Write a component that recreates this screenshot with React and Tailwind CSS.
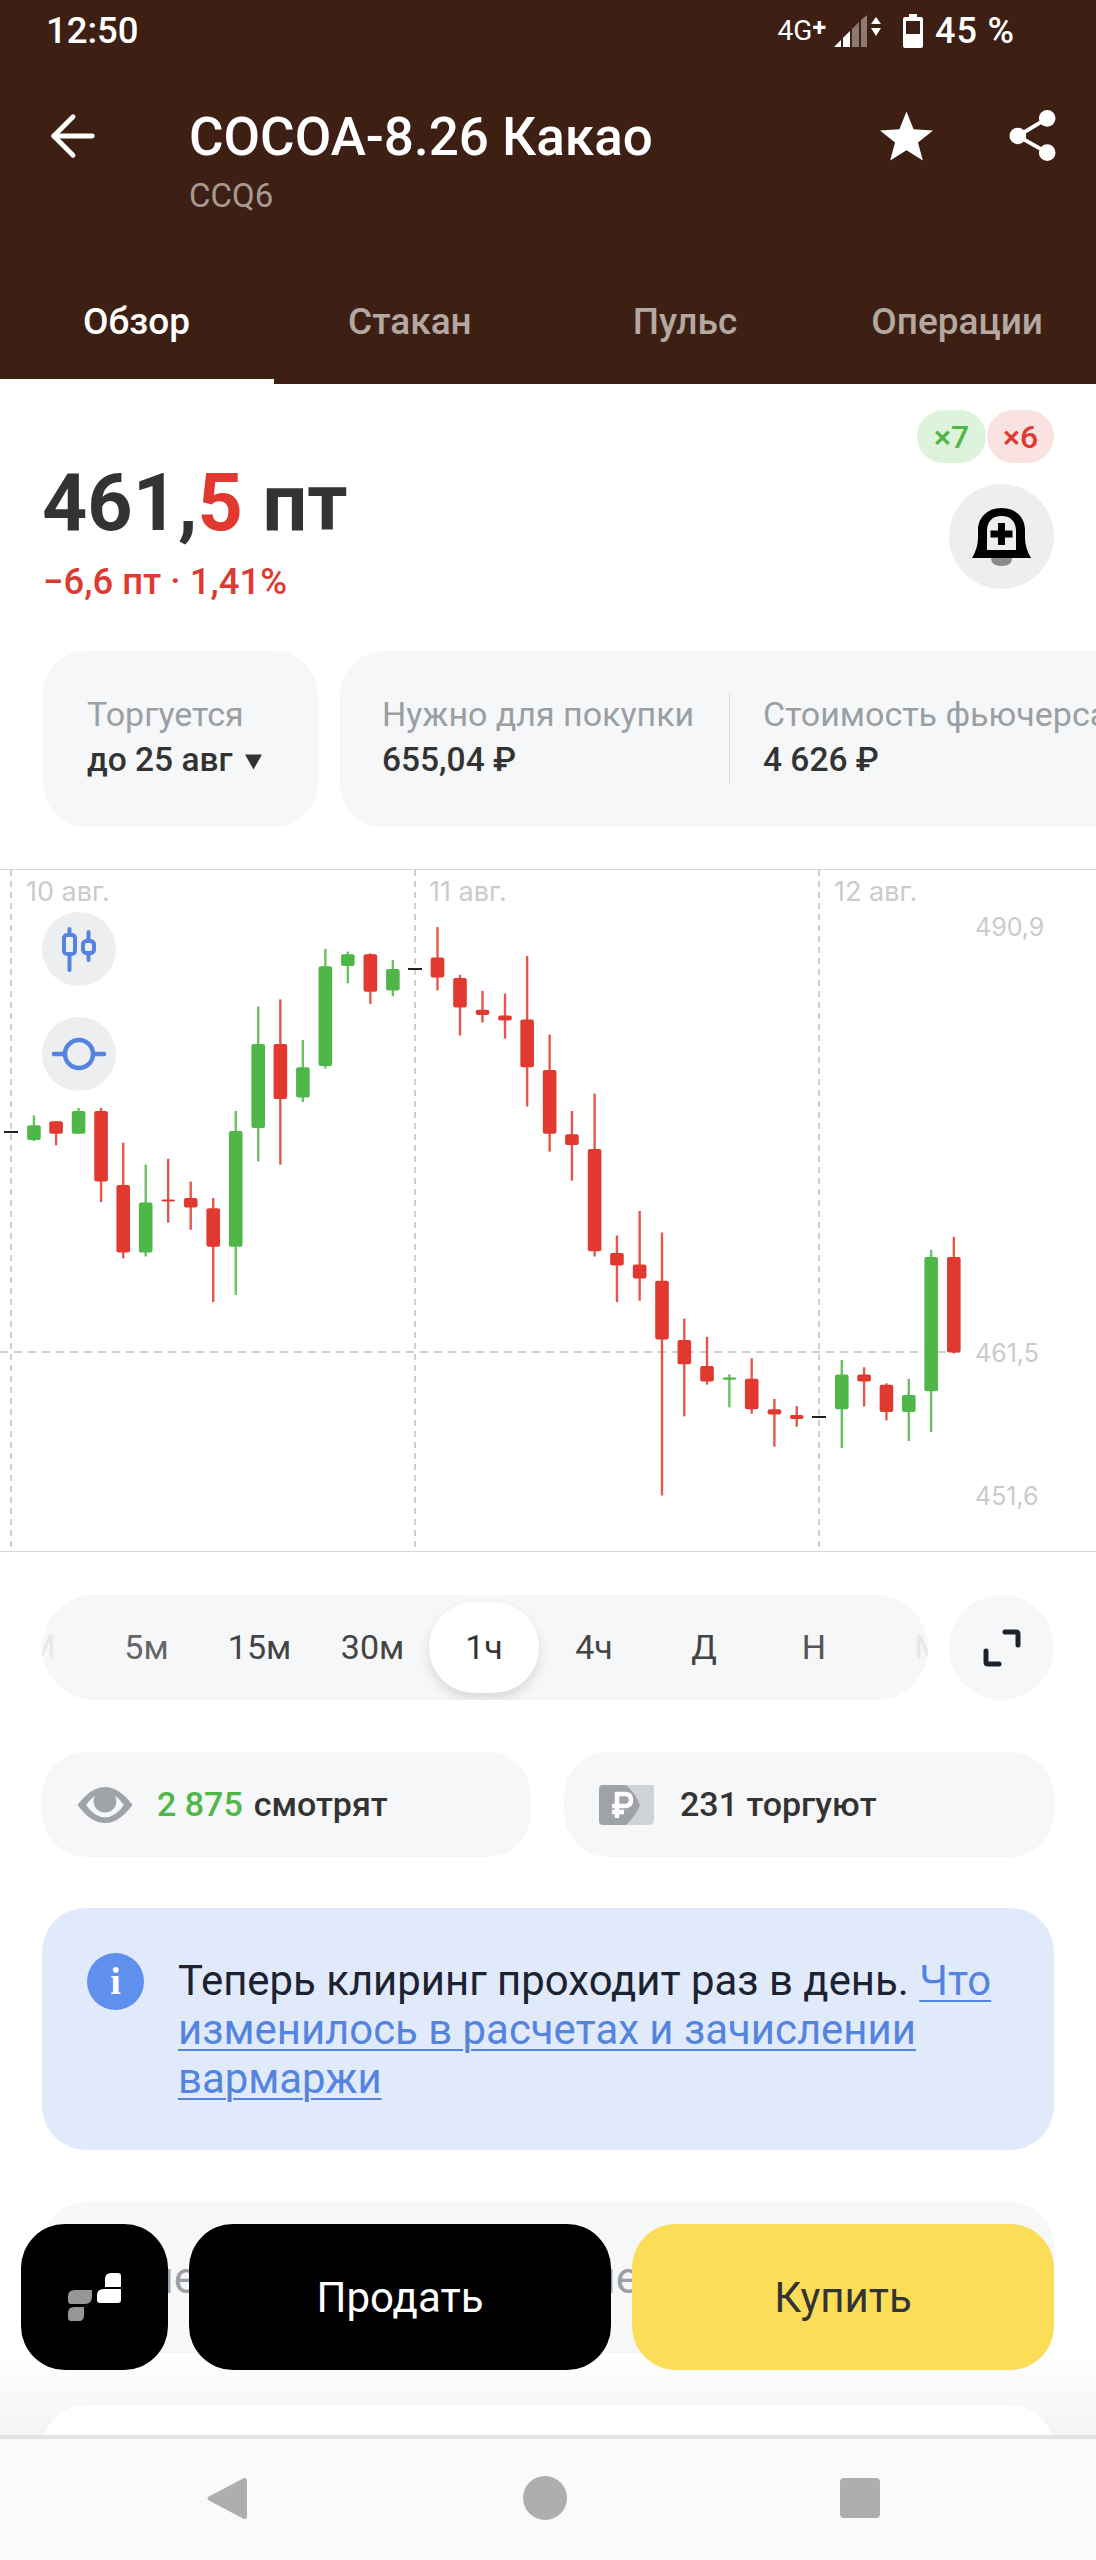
import React from 'react';
import { ArrowLeft } from 'lucide-react';

const UP = '#4fb648';
const DOWN = '#e1382f';

// candles as x, wick top, wick bottom, body top, body bottom, in chart pixels
const z3 = (x, a, b, c, d, color) => ({ x: x / 2.8, wt: a / 2.24 - 9, wb: b / 2.24 - 9, bt: c / 2.24 - 9, bb: d / 2.24 - 9, color });
const z4 = (x, a, b, c, d, color) => ({ x: 540 + x / 2.82, wt: a / 2.24 - 9, wb: b / 2.24 - 9, bt: c / 2.24 - 9, bb: d / 2.24 - 9, color });

const candles = [
  z3(95, 570, 627, 592, 625, UP), z3(157, 583, 637, 583, 611, DOWN), z3(220, 553, 611, 560, 611, UP),
  z3(283, 553, 764, 560, 718, DOWN), z3(345, 631, 890, 726, 877, DOWN), z3(408, 680, 886, 765, 877, UP),
  z3(471, 667, 810, 758, 761, DOWN), z3(534, 718, 826, 755, 776, DOWN), z3(597, 755, 988, 778, 864, DOWN),
  z3(660, 560, 972, 605, 864, UP), z3(723, 326, 673, 410, 598, UP), z3(785, 310, 680, 410, 533, DOWN),
  z3(848, 401, 540, 462, 530, UP), z3(911, 197, 465, 236, 459, UP), z3(974, 203, 274, 209, 235, UP),
  z3(1037, 207, 320, 209, 293, DOWN), z3(1100, 222, 303, 242, 290, UP), z3(1225, 148, 290, 216, 261, DOWN),
  z3(1288, 255, 391, 262, 328, DOWN), z3(1351, 291, 362, 333, 345, DOWN), z3(1414, 297, 398, 346, 357, DOWN),
  z3(1476, 213, 550, 355, 462, DOWN), z3(1539, 389, 651, 468, 611, DOWN),
  z4(90, 560, 716, 612, 636, DOWN), z4(154, 521, 886, 645, 874, DOWN), z4(217, 839, 988, 878, 906, DOWN),
  z4(281, 784, 985, 904, 935, DOWN), z4(344, 832, 1421, 940, 1072, DOWN), z4(407, 1025, 1244, 1073, 1127, DOWN),
  z4(471, 1066, 1173, 1131, 1166, DOWN), z4(534, 1150, 1224, 1157, 1162, UP), z4(597, 1114, 1238, 1160, 1228, DOWN),
  z4(661, 1205, 1312, 1228, 1240, DOWN), z4(724, 1221, 1267, 1241, 1250, DOWN), z4(851, 1118, 1315, 1150, 1228, UP),
  z4(914, 1134, 1222, 1150, 1166, DOWN), z4(977, 1170, 1253, 1173, 1234, DOWN), z4(1040, 1160, 1299, 1196, 1234, UP),
  z4(1103, 871, 1279, 887, 1188, UP), z4(1167, 842, 1103, 887, 1101, DOWN),
];

const dashes = [[11, 262], [415, 99], [819, 547]];

const StatusBar = () => (
  <div className="h-[62px] flex items-center justify-between pl-[46px] pr-[81px] text-white">
    <span className="text-[36.5px] leading-none font-medium">12:50</span>
    <div className="flex items-center">
      <span className="text-[28px] leading-none">4G</span>
      <span className="text-[25px] leading-none font-bold -mt-2">+</span>
      <svg width="49" height="32" viewBox="0 0 49 32" className="ml-2">
        <path d="M0 32 L7 25 V32Z" fill="#fff" />
        <path d="M9 32 V23 L16 16 V32Z" fill="#fff" />
        <path d="M18 32 V14 L25 7 V32Z" fill="#8c7a72" />
        <path d="M27 32 V5 L33 0 V32Z" fill="#8c7a72" />
        <path d="M37 9 L42 2 L47 9Z M37 13 H47 L42 21Z" fill="#fff" />
      </svg>
      <svg width="20" height="34" viewBox="0 0 20 34" className="ml-5">
        <path d="M6 0 H14 V3 H18 Q20 3 20 5 V32 Q20 34 18 34 H2 Q0 34 0 32 V5 Q0 3 2 3 H6Z" fill="#fff" />
        <rect x="3" y="7" width="14" height="13" fill="#3d1f14" />
      </svg>
      <span className="ml-3 text-[36px] leading-none font-medium tracking-wide">45 %</span>
    </div>
  </div>
);

const Header = () => (
  <div className="h-[384px] bg-[#3d1f14] flex flex-col shrink-0">
    <StatusBar />
    <div className="flex h-[148px] pl-[40px] pr-[40px] pt-[40px]">
      <ArrowLeft size={66} color="#fff" strokeWidth={1.75} className="mt-px shrink-0" />
      <div className="ml-[83px] flex-1">
        <div className="text-white text-[53px] leading-[70px] font-medium">COCOA-8.26 Какао</div>
        <div className="text-[#a89a93] text-[33px] leading-[40px] mt-[4px]">CCQ6</div>
      </div>
      <svg width="53" height="50" viewBox="0 0 24 22.2" fill="#fff" className="mt-[9px]">
        <path d="M12 0 L15.2 8 L24 8.6 L17.2 14 L19.4 22.2 L12 17.6 L4.6 22.2 L6.8 14 L0 8.6 L8.8 8Z" />
      </svg>
      <svg width="47" height="53" viewBox="0 0 48 53" fill="#fff" className="ml-[76px] mt-[7px]">
        <circle cx="39" cy="9" r="8.5" />
        <circle cx="9" cy="27" r="8.5" />
        <circle cx="39" cy="44" r="8.5" />
        <path d="M39 9 L9 27 L39 44" fill="none" stroke="#fff" strokeWidth="4" />
      </svg>
    </div>
    <div className="flex-1 font-medium text-[37px] leading-[42px] text-[#b5a8a2] flex">
      <div className="w-[274px] pl-[83px] pt-[91px] text-white border-b-[5px] border-white">Обзор</div>
      <div className="ml-[74px] pt-[91px]">Стакан</div>
      <div className="ml-[161px] pt-[91px]">Пульс</div>
      <div className="ml-[134px] pt-[91px]">Операции</div>
    </div>
  </div>
);

const PriceBlock = () => (
  <div className="relative h-[267px] shrink-0">
    <div className="pl-[42px] pt-[74px] text-[79px] leading-[90px] font-bold text-[#333]">
      461,<span className="text-[#e1382f]">5</span> пт
    </div>
    <div className="pl-[43px] pt-[12px] text-[36.5px] leading-[44px] font-medium text-[#dc3a32]">−6,6 пт · 1,41%</div>
    <div className="absolute right-[42px] top-[26px] flex gap-px">
      <span className="w-[69px] h-[53px] rounded-full bg-[#ddf3dc] text-[#4fb648] text-[32px] font-medium flex items-center justify-center">×7</span>
      <span className="w-[67px] h-[53px] rounded-full bg-[#fae2e1] text-[#dc3a32] text-[32px] font-medium flex items-center justify-center">×6</span>
    </div>
    <div className="absolute right-[42px] top-[100px] w-[105px] h-[105px] rounded-full bg-[#eceeef] flex items-center justify-center">
      <svg width="59" height="58" viewBox="0 0 59 58">
        <path d="M19 50 H40 Q40 58 29.5 58 Q19 58 19 50Z" fill="#8a8a8a" />
        <path fillRule="evenodd" d="M29.5 0 C16 0 6 9 6 22 V30 Q6 40 0 50 H59 Q53 40 53 30 V22 C53 9 43 0 29.5 0Z M29.5 8 C20 8 15 14 15 23 V42 H44 V23 C44 14 39 8 29.5 8Z" fill="#000" />
        <path d="M26 15 H33 V22.5 H40.5 V29.5 H33 V37 H26 V29.5 H18.5 V22.5 H26Z" fill="#000" />
      </svg>
    </div>
  </div>
);

const InfoCards = () => (
  <div className="h-[176px] shrink-0 flex pl-[43px] gap-[22px] overflow-hidden">
    <div className="w-[275px] shrink-0 rounded-[44px] bg-[#f6f7f8] pl-[44px] pt-[42px]">
      <div className="text-[34px] leading-[42px] text-[#9a9fa4]">Торгуется</div>
      <div className="mt-[4px] text-[33.5px] leading-[42px] font-medium text-[#333] flex items-center">
        до 25 авг
        <svg width="17" height="16" viewBox="0 0 18 16" className="ml-[12px] mt-[3px]"><path d="M0 0 H18 L9 16Z" fill="#333" /></svg>
      </div>
    </div>
    <div className="flex-1 rounded-l-[44px] bg-[#f6f7f8] flex pl-[42px] pt-[42px] whitespace-nowrap">
      <div className="w-[347px] shrink-0">
        <div className="text-[34px] leading-[42px] text-[#9a9fa4]">Нужно для покупки</div>
        <div className="mt-[4px] text-[33.5px] leading-[42px] font-medium text-[#333]">655,04 ₽</div>
      </div>
      <div className="w-px h-[91px] bg-[#dcdfe1] shrink-0" />
      <div className="pl-[33px]">
        <div className="text-[34px] leading-[42px] text-[#9a9fa4]">Стоимость фьючерса</div>
        <div className="mt-[4px] text-[33.5px] leading-[42px] font-medium text-[#333]">4 626 ₽</div>
      </div>
    </div>
  </div>
);

const Chart = () => (
  <div className="relative mt-[42px] h-[683px] shrink-0 border-y border-[#d5d5d5] overflow-hidden">
    <svg width="1096" height="682" className="absolute inset-0">
      {dashes.map(([x]) => (
        <line key={x} x1={x} x2={x} y1="0" y2="682" stroke="#cfcfcf" strokeWidth="2" strokeDasharray="6 5" />
      ))}
      <line x1="0" x2="965" y1="482" y2="482" stroke="#cfcfcf" strokeWidth="2" strokeDasharray="8 6" />
      {dashes.map(([x, y]) => (
        <line key={y} x1={x - 7} x2={x + 7} y1={y} y2={y} stroke="#222" strokeWidth="2" />
      ))}
      {candles.map((c) => (
        <g key={c.x}>
          <line x1={c.x} x2={c.x} y1={c.wt} y2={c.wb} stroke={c.color} strokeWidth="2.4" strokeOpacity="0.85" />
          <rect x={c.x - 6.8} y={c.bt} width="13.6" height={Math.max(c.bb - c.bt, 2)} rx="2" fill={c.color} />
        </g>
      ))}
    </svg>
    <span className="absolute left-[26px] top-[8px] text-[27px] leading-[28px] text-[#c9cbcd] font-['Inter',sans-serif]">10 авг.</span>
    <span className="absolute left-[429px] top-[8px] text-[27px] leading-[28px] text-[#c9cbcd] font-['Inter',sans-serif]">11 авг.</span>
    <span className="absolute left-[834px] top-[8px] text-[27px] leading-[28px] text-[#c9cbcd] font-['Inter',sans-serif]">12 авг.</span>
    <span className="absolute left-[975px] top-[43px] text-[25px] leading-[28px] text-[#c9cbcd] font-['Inter',sans-serif]">490,9</span>
    <span className="absolute left-[975px] top-[469px] text-[25px] leading-[28px] text-[#c9cbcd] font-['Inter',sans-serif]">461,5</span>
    <span className="absolute left-[975px] top-[612px] text-[25px] leading-[28px] text-[#c9cbcd] font-['Inter',sans-serif]">451,6</span>
    <div className="absolute left-[42px] top-[42px] flex flex-col gap-[31px]">
      <div className="w-[74px] h-[74px] rounded-full bg-[#eceeef] flex items-center justify-center">
        <svg width="36" height="46" viewBox="0 0 36 46" fill="none" stroke="#5484e0" strokeWidth="4" strokeLinecap="round">
          <rect x="3" y="9" width="11" height="19" rx="3" />
          <path d="M8.5 3 V9 M8.5 28 V44" />
          <rect x="22" y="15" width="11" height="12" rx="3.5" />
          <path d="M27.5 6 V15 M27.5 27 V34" />
        </svg>
      </div>
      <div className="w-[74px] h-[74px] rounded-full bg-[#eceeef] flex items-center justify-center">
        <svg width="54" height="34" viewBox="0 0 54 34" fill="none" stroke="#5484e0" strokeWidth="4.5" strokeLinecap="round">
          <ellipse cx="27" cy="17" rx="14" ry="14" />
          <path d="M2 17 H12 M42 17 H52" />
        </svg>
      </div>
    </div>
  </div>
);

const PeriodBar = () => (
  <div className="mt-[43px] h-[105px] shrink-0 flex px-[42px] gap-[21px]">
    <div className="relative flex-1 rounded-full bg-[#f6f7f8] flex items-center overflow-hidden pl-[48px] text-[34px] text-[#444]">
      <span className="absolute left-[-16px] text-[#e6e8ea]">М</span>
      <span className="w-[113px] text-center text-[#666]">5м</span>
      <span className="w-[113px] text-center">15м</span>
      <span className="w-[113px] text-center">30м</span>
      <span className="w-[110px] h-[91px] rounded-full bg-white shadow-[0_6px_12px_rgba(0,0,0,0.12)] flex items-center justify-center text-[#333]">1ч</span>
      <span className="w-[110px] text-center">4ч</span>
      <span className="w-[110px] text-center">Д</span>
      <span className="w-[110px] text-center text-[#555]">Н</span>
      <span className="absolute right-[-16px] text-[#e6e8ea]">М</span>
    </div>
    <div className="w-[105px] h-[105px] rounded-full bg-[#f6f7f8] flex items-center justify-center">
      <svg width="38" height="38" viewBox="0 0 38 38" fill="none" stroke="#1c2230" strokeWidth="5" strokeLinecap="round" strokeLinejoin="round">
        <path d="M22 3 H33 Q35 3 35 5 V16" />
        <path d="M3 22 V33 Q3 35 5 35 H16" />
      </svg>
    </div>
  </div>
);

const Stats = () => (
  <div className="mt-[52px] h-[105px] shrink-0 flex px-[42px] gap-[33px] text-[34px] font-medium text-[#333]">
    <div className="flex-1 rounded-[44px] bg-[#f6f7f8] flex items-center pl-[34px]">
      <svg width="58" height="36" viewBox="0 0 58 38" className="shrink-0">
        <path fillRule="evenodd" d="M0 19 Q14 0 29 0 Q44 0 58 19 Q44 38 29 38 Q14 38 0 19Z M9 19 Q18 32 29 32 Q40 32 49 19 Q40 6 29 6 Q18 6 9 19Z" fill="#a0a4a8" />
        <circle cx="29" cy="15" r="12" fill="#a0a4a8" />
      </svg>
      <span className="ml-[23px] text-[#4fb648]">2 875</span>
      <span className="ml-[11px]">смотрят</span>
    </div>
    <div className="flex-1 rounded-[44px] bg-[#f6f7f8] flex items-center pl-[35px]">
      <svg width="55" height="40" viewBox="0 0 55 40" className="shrink-0">
        <path d="M20 0 H55 V34 Q55 40 49 40 H20Z" fill="#cfd3d7" />
        <path d="M4 0 H27 Q36 8 41 20 Q36 32 27 40 H4 Q0 40 0 36 V4 Q0 0 4 0Z" fill="#9fa3a8" />
        <path d="M18 33 V9 H26 Q32 9 32 15 Q32 21 26 21 H13 M13 27 H25" fill="none" stroke="#fff" strokeWidth="4.5" />
      </svg>
      <span className="ml-[26px]">231 торгуют</span>
    </div>
  </div>
);

const Notice = () => (
  <div className="mt-[51px] mx-[42px] h-[242px] shrink-0 rounded-[44px] bg-[#e1eafb] flex pl-[45px] pr-[40px] pt-[48px]">
    <div className="w-[57px] h-[57px] -mt-[3px] rounded-full bg-[#5f90ee] flex items-center justify-center text-white text-[38px] font-bold shrink-0 font-['Liberation_Serif',serif]">i</div>
    <p className="ml-[34px] text-[41.9px] leading-[49px] text-[#1c2230]">
      Теперь клиринг проходит раз в день.{' '}
      <span className="text-[#5484e0] underline underline-offset-[5px] decoration-2">Что изменилось в расчетах и зачислении вармаржи</span>
    </p>
  </div>
);

const ActionBar = () => (
  <div className="absolute left-[21px] right-[42px] bottom-[190px] h-[146px] flex gap-[21px] text-[42px]">
    <div className="w-[147px] rounded-[44px] bg-black flex items-center justify-center">
      <svg width="53" height="48" viewBox="0 0 53 48">
        <path d="M43 0 H50 Q53 0 53 3 V14 H37 V6 Q37 0 43 0Z" fill="#fff" />
        <path d="M36 16 H53 V27 Q53 30 50 30 H32 Q29 30 29 27 V22 Q29 16 36 16Z" fill="#fff" />
        <path d="M7 17 H24 V23 Q24 31 17 31 H3 Q0 31 0 28 V23 Q0 17 7 17Z" fill="#969696" />
        <path d="M6 34 H16 V42 Q16 48 11 48 H3 Q0 48 0 45 V40 Q0 34 6 34Z" fill="#969696" />
      </svg>
    </div>
    <div className="flex-1 rounded-[44px] bg-black text-white flex items-center justify-center pt-px">Продать</div>
    <div className="w-[422px] rounded-[44px] bg-[#fbdd58] text-[#333] flex items-center justify-center pt-px">Купить</div>
  </div>
);

const NavBar = () => (
  <div className="h-[125px] shrink-0 bg-[#fafafa] border-t-[4px] border-[#e3e3e3] flex items-center relative z-10 pb-[3px]">
    <svg width="40" height="45" viewBox="0 0 40 44" className="ml-[207px]"><path d="M36 2 Q40 0 40 5 V39 Q40 44 36 42 L2 24 Q-1 22 2 20Z" fill="#aeaeae" /></svg>
    <div className="ml-[276px] w-[44px] h-[44px] rounded-full bg-[#aeaeae]" />
    <div className="ml-[273px] w-[40px] h-[40px] rounded-[4px] bg-[#aeaeae]" />
  </div>
);

export default function App() {
  return (
    <div className="relative w-[1096px] h-[2560px] overflow-hidden bg-white flex flex-col font-['Roboto',sans-serif]">
      <Header />
      <PriceBlock />
      <InfoCards />
      <Chart />
      <PeriodBar />
      <Stats />
      <Notice />
      <div className="flex-1 relative overflow-hidden">
        {/* tab card peeking out from behind the floating buttons */}
        <div className="mt-[52px] mx-[42px] h-[151px] rounded-[44px] bg-[#f6f7f8] flex items-center text-[44px] text-[#9a9fa4] whitespace-nowrap overflow-hidden">
          <div className="w-[155px] flex justify-end shrink-0">Акцие</div>
          <div className="w-[442px] flex justify-end shrink-0">Акцие</div>
        </div>
        <div className="absolute inset-x-0 top-[203px] h-[85px] bg-gradient-to-b from-white to-[#f2f3f4]" />
        <div className="absolute inset-x-[42px] top-[255px] h-[60px] rounded-t-[44px] bg-white" />
      </div>
      <NavBar />
      <ActionBar />
    </div>
  );
}
